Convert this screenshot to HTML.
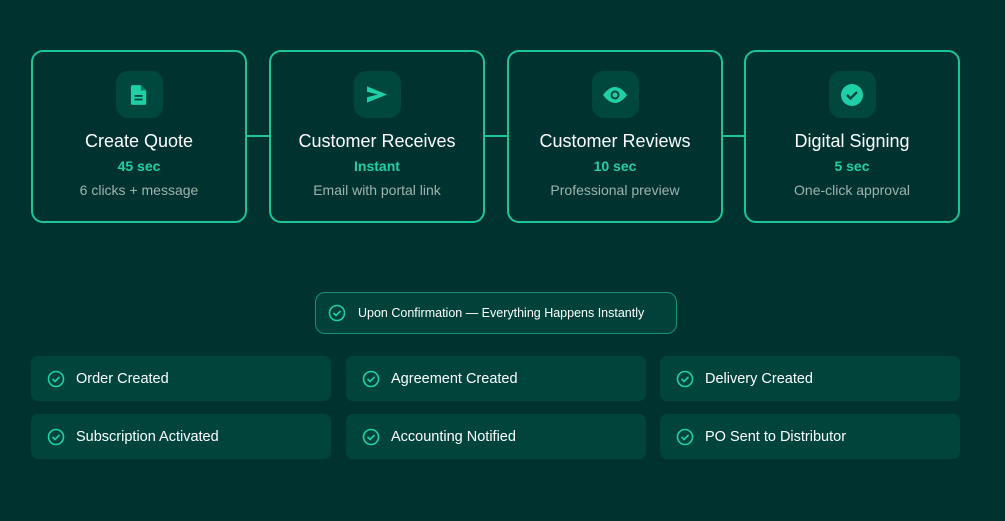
<!DOCTYPE html><html><head><style>
body{margin:0;width:1005px;height:521px;background:#00332f;font-family:"Liberation Sans",sans-serif;position:relative;overflow:hidden}
.card{position:absolute;top:50px;width:212px;height:169px;border:2px solid #1cc49c;border-radius:12px;text-align:center;color:#fff}
.ib{width:47px;height:47px;border-radius:12px;background:#00473e;margin:19px auto 0;display:flex;align-items:center;justify-content:center}
.t{font-size:18px;margin-top:13px}
.s{color:#1fd0a6;font-size:14px;margin-top:6px;font-weight:bold}
.d{color:#9fb3ae;font-size:14px;margin-top:8px}
.ln{position:absolute;top:135px;height:2px;width:23px;background:#1cc49c}
.pill{position:absolute;left:315px;top:292px;width:360px;height:40px;border:1px solid #1a8f76;border-radius:10px;background:#004239;color:#fff;font-size:12.5px;display:flex;align-items:center}
.it{position:absolute;width:300px;height:45px;border-radius:7px;background:#00443b;color:#fff;font-size:14.5px;display:flex;align-items:center}
.it svg{margin:0 11px 0 16px}
</style></head><body>
<div class="card" style="left:31px"><div class="ib"><svg width="18" height="20" viewBox="0 0 20 22"><path d="M3 0h9l6 6v14a2 2 0 0 1-2 2H3a2 2 0 0 1-2-2V2a2 2 0 0 1 2-2z" fill="#1fd0a6"/><path d="M12 0v6h6" fill="#0a7a63"/><rect x="5" y="11" width="9" height="2" fill="#00473e"/><rect x="5" y="15" width="9" height="2" fill="#00473e"/></svg></div><div class="t">Create Quote</div><div class="s">45 sec</div><div class="d">6 clicks + message</div></div>
<div class="ln" style="left:246px"></div>
<div class="card" style="left:269px"><div class="ib"><svg width="20" height="17" viewBox="0 0 22 18"><path d="M0 0L22 9L0 18L0 12L12 9L0 6Z" fill="#1fd0a6"/></svg></div><div class="t">Customer Receives</div><div class="s">Instant</div><div class="d">Email with portal link</div></div>
<div class="ln" style="left:484px"></div>
<div class="card" style="left:507px"><div class="ib"><svg width="24" height="16" viewBox="0 0 24 16"><path d="M0 8Q12-8 24 8Q12 24 0 8Z" fill="#1fd0a6"/><circle cx="12" cy="8" r="3.5" fill="none" stroke="#00473e" stroke-width="2"/></svg></div><div class="t">Customer Reviews</div><div class="s">10 sec</div><div class="d">Professional preview</div></div>
<div class="ln" style="left:721px"></div>
<div class="card" style="left:744px"><div class="ib"><svg width="22" height="22" viewBox="0 0 22 22"><circle cx="11" cy="11" r="11" fill="#1fd0a6"/><path d="M6 11l3.5 3.5L16 8" fill="none" stroke="#00473e" stroke-width="2.4"/></svg></div><div class="t">Digital Signing</div><div class="s">5 sec</div><div class="d">One-click approval</div></div>
<div class="pill"><svg width="18" height="18" viewBox="0 0 18 18" style="margin:0 12px 0 12px"><circle cx="9" cy="9" r="7.5" fill="none" stroke="#1fd0a6" stroke-width="1.6"/><path d="M5.5 9l2.5 2.5 4.5-4.5" fill="none" stroke="#1fd0a6" stroke-width="1.6"/></svg>Upon Confirmation — Everything Happens Instantly</div>
<div class="it" style="left:31px;top:356px"><svg width="18" height="18" viewBox="0 0 18 18"><circle cx="9" cy="9" r="7.5" fill="none" stroke="#1fd0a6" stroke-width="1.6"/><path d="M5.5 9l2.5 2.5 4.5-4.5" fill="none" stroke="#1fd0a6" stroke-width="1.6"/></svg>Order Created</div>
<div class="it" style="left:346px;top:356px"><svg width="18" height="18" viewBox="0 0 18 18"><circle cx="9" cy="9" r="7.5" fill="none" stroke="#1fd0a6" stroke-width="1.6"/><path d="M5.5 9l2.5 2.5 4.5-4.5" fill="none" stroke="#1fd0a6" stroke-width="1.6"/></svg>Agreement Created</div>
<div class="it" style="left:660px;top:356px"><svg width="18" height="18" viewBox="0 0 18 18"><circle cx="9" cy="9" r="7.5" fill="none" stroke="#1fd0a6" stroke-width="1.6"/><path d="M5.5 9l2.5 2.5 4.5-4.5" fill="none" stroke="#1fd0a6" stroke-width="1.6"/></svg>Delivery Created</div>
<div class="it" style="left:31px;top:414px"><svg width="18" height="18" viewBox="0 0 18 18"><circle cx="9" cy="9" r="7.5" fill="none" stroke="#1fd0a6" stroke-width="1.6"/><path d="M5.5 9l2.5 2.5 4.5-4.5" fill="none" stroke="#1fd0a6" stroke-width="1.6"/></svg>Subscription Activated</div>
<div class="it" style="left:346px;top:414px"><svg width="18" height="18" viewBox="0 0 18 18"><circle cx="9" cy="9" r="7.5" fill="none" stroke="#1fd0a6" stroke-width="1.6"/><path d="M5.5 9l2.5 2.5 4.5-4.5" fill="none" stroke="#1fd0a6" stroke-width="1.6"/></svg>Accounting Notified</div>
<div class="it" style="left:660px;top:414px"><svg width="18" height="18" viewBox="0 0 18 18"><circle cx="9" cy="9" r="7.5" fill="none" stroke="#1fd0a6" stroke-width="1.6"/><path d="M5.5 9l2.5 2.5 4.5-4.5" fill="none" stroke="#1fd0a6" stroke-width="1.6"/></svg>PO Sent to Distributor</div>
</body></html>
